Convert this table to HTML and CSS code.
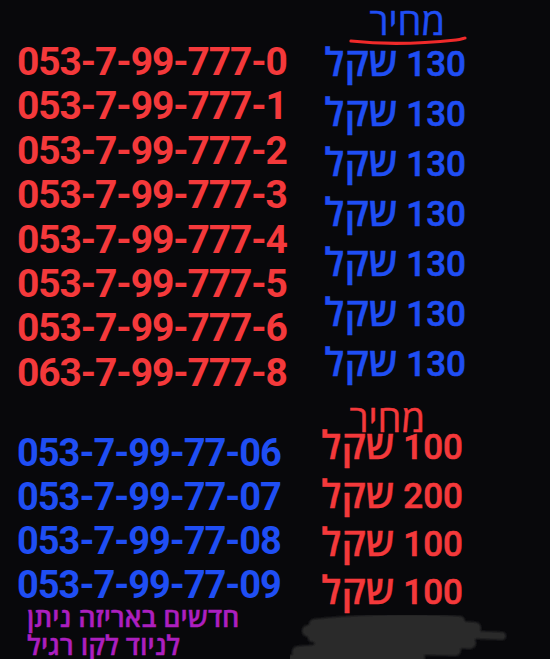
FILE: index.html
```html
<!DOCTYPE html>
<html lang="he">
<head>
<meta charset="utf-8">
<link rel="stylesheet" href="styles.css">
</head>
<body>
<div class="page">
  <section class="block block-top">
    <div class="numbers red">
      <div class="num">053-7-99-777-0</div>
      <div class="num">053-7-99-777-1</div>
      <div class="num">053-7-99-777-2</div>
      <div class="num">053-7-99-777-3</div>
      <div class="num">053-7-99-777-4</div>
      <div class="num">053-7-99-777-5</div>
      <div class="num">053-7-99-777-6</div>
      <div class="num">063-7-99-777-8</div>
    </div>
    <div class="prices blue" dir="rtl">
      <div class="head head-top">מחיר
        <svg class="underline" width="120" height="12" viewBox="0 0 120 12"><path d="M3 7 C 30 10, 70 10, 108 6 C 113 5.5, 116 4, 117 4" stroke="#f02a2a" stroke-width="3.2" fill="none" stroke-linecap="round"/></svg>
      </div>
      <div class="price">130 <span class="heb">שקל</span></div>
      <div class="price">130 <span class="heb">שקל</span></div>
      <div class="price">130 <span class="heb">שקל</span></div>
      <div class="price">130 <span class="heb">שקל</span></div>
      <div class="price">130 <span class="heb">שקל</span></div>
      <div class="price">130 <span class="heb">שקל</span></div>
      <div class="price">130 <span class="heb">שקל</span></div>
    </div>
  </section>
  <section class="block block-bottom">
    <div class="numbers blue numbers-bottom">
      <div class="num">053-7-99-77-06</div>
      <div class="num">053-7-99-77-07</div>
      <div class="num">053-7-99-77-08</div>
      <div class="num">053-7-99-77-09</div>
      <div class="note" dir="rtl">חדשים באריזה ניתן<br>לניוד לקו רגיל</div>
    </div>
    <div class="prices red prices-bottom" dir="rtl">
      <div class="head head-bottom">מחיר</div>
      <div class="price">100 <span class="heb">שקל</span></div>
      <div class="price">200 <span class="heb">שקל</span></div>
      <div class="price">100 <span class="heb">שקל</span></div>
      <div class="price">100 <span class="heb">שקל</span></div>
    </div>
  </section>
  <svg class="scribble" width="230" height="48" viewBox="0 0 230 48">
    <defs><filter id="bl"><feGaussianBlur stdDeviation="1.1"/></filter></defs>
    <g stroke="#2a2a2c" stroke-linecap="round" fill="none" filter="url(#bl)">
      <path d="M24 10 C 70 5, 130 4, 170 7" stroke-width="10"/>
      <path d="M18 17 C 80 12, 140 11, 185 14" stroke-width="12"/>
      <path d="M22 24 C 90 20, 160 19, 212 22" stroke-width="8"/>
      <path d="M30 29 C 90 26, 140 26, 180 29" stroke-width="12"/>
      <path d="M8 38 C 60 34, 110 34, 165 36" stroke-width="12"/>
      <path d="M0 46 C 40 43, 90 42, 130 44" stroke-width="10"/>
    </g>
  </svg>
</div>
</body>
</html>
```
FILE: styles.css
```css
html, body {
  margin: 0;
  padding: 0;
  background: #08080b;
}
.page {
  position: relative;
  width: 550px;
  height: 659px;
  overflow: hidden;
  font-family: Roboto, "Open Sans", "Noto Sans", sans-serif;
}
.red { color: #f4393b; }
.blue { color: #1f4ef4; }
.block {
  display: grid;
  grid-template-columns: 300px 166px;
  align-items: start;
}
.numbers {
  padding-left: 17px;
}
.num {
  font-size: 39px;
  font-weight: 700;
  letter-spacing: -1.1px;
  line-height: 44.4px;
  white-space: nowrap;
}
.block-top .numbers { padding-top: 40px; }
.numbers-bottom { padding-top: 36px; }
.numbers-bottom .num { font-size: 38px; line-height: 44px; letter-spacing: -1px; }
.prices {
  text-align: right;
  font-weight: 500;
}
.price {
  font-size: 35px;
  line-height: 50px;
  white-space: nowrap;
  -webkit-text-stroke: 0.6px currentColor;
}
.heb {
  font-family: "Open Sans", sans-serif;
  font-weight: 600;
  font-size: 39px;
  line-height: 0;
  -webkit-text-stroke: 0.3px currentColor;
}
.prices-bottom { padding-right: 3px; }
.prices-bottom .price { line-height: 48.3px; }
.head {
  font-family: "Open Sans", sans-serif;
  font-size: 38px;
  font-weight: 500;
  white-space: nowrap;
  -webkit-text-stroke: 0.4px currentColor;
}
.head-top {
  position: relative;
  height: 40px;
  line-height: 40px;
  padding-right: 21px;
  box-sizing: border-box;
}
.underline {
  position: absolute;
  right: -2px;
  top: 34px;
}
.head-bottom {
  height: 26px;
  line-height: 26px;
  padding-top: 9px;
  margin-bottom: -6px;
  padding-right: 38px;
}
.note {
  margin-top: -4px;
  color: #ac1fbf;
  font-family: "Open Sans", sans-serif;
  font-size: 27px;
  font-weight: 600;
  line-height: 28px;
  text-align: left;
  padding-left: 10px;
  -webkit-text-stroke: 0.4px currentColor;
}
.scribble {
  position: absolute;
  left: 290px;
  top: 614px;
}
```
